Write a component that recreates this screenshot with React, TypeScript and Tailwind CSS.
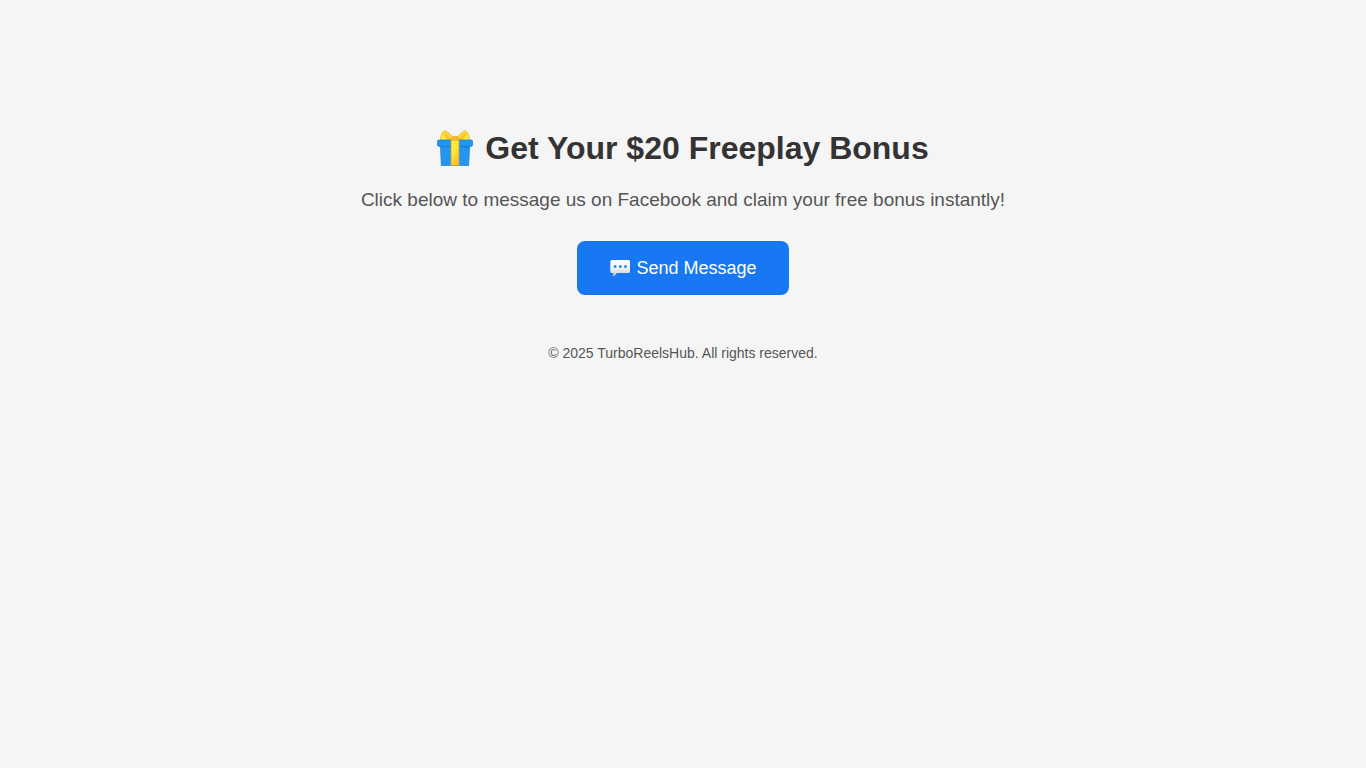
function GiftIcon() {
  return (
    <svg className="h-9 w-9 shrink-0" viewBox="21 18 108 108" role="img" aria-label="Gift">
      <defs>
        <linearGradient id="ribbon" x1="0" y1="0" x2="0.35" y2="1">
          <stop offset="0" stopColor="#ffee3b" />
          <stop offset="0.5" stopColor="#fee838" />
          <stop offset="1" stopColor="#fbc02d" />
        </linearGradient>
      </defs>
      <path d="M31 65H119L116 125H34Z" fill="#2196f3" stroke="#1c80d2" strokeWidth="2" />
      <path d="M32 67H118L117 76L88 68H62L33 71Z" fill="#1e88e5" />
      <path d="M31 49C31 38 36 23 44 20C50 19 63 33 72 42L66 49Z" fill="#fdd835" stroke="#dba52e" strokeWidth="1.5" />
      <path d="M119 49C119 38 114 23 106 20C100 19 87 33 78 42L84 49Z" fill="#fdd835" stroke="#dba52e" strokeWidth="1.5" />
      <path d="M41 28C47 29 58 39 64 47H55C49 42 43 35 41 28Z" fill="#fbc02d" />
      <path d="M109 28C103 29 92 39 86 47H95C101 42 107 35 109 28Z" fill="#fbc02d" />
      <path d="M33 48C34 40 37 33 40 30C42 37 47 43 53 48Z" fill="#ffeb3b" />
      <path d="M117 48C116 40 113 33 110 30C108 37 103 43 97 48Z" fill="#ffeb3b" />
      <rect x="22" y="48" width="106" height="19" rx="5" fill="#2196f3" stroke="#1976c5" strokeWidth="2" />
      <rect x="63" y="46" width="24" height="79" fill="url(#ribbon)" stroke="#d99b27" strokeWidth="2" />
      <path d="M62 49C62 41 68 37 75 37C82 37 88 41 88 49Z" fill="#f9b92d" stroke="#c9952f" strokeWidth="1.5" />
    </svg>
  );
}

function SpeechIcon() {
  return (
    <svg className="h-[18px] w-[22px] shrink-0" viewBox="0 0 22 18" role="img" aria-label="Chat">
      <defs>
        <linearGradient id="bubble" x1="0" y1="0" x2="0" y2="1">
          <stop offset="0" stopColor="#ffffff" />
          <stop offset="0.45" stopColor="#f5f5f5" />
          <stop offset="1" stopColor="#cccccc" />
        </linearGradient>
      </defs>
      <path
        d="M3 1H19.5Q21 1 21 2.5V12.5Q21 14 19.5 14H7.8C6.8 15.6 5.4 17 4 17.2C3.4 17.1 3.7 16.7 4 16.2C4.4 15.5 4.5 14.8 4.4 14H3Q1.3 14 1.3 12.5V2.5Q1.3 1 3 1Z"
        fill="url(#bubble)"
      />
      <circle cx="6.1" cy="7.4" r="1.5" fill="#2b8fe0" />
      <circle cx="11.3" cy="7.4" r="1.5" fill="#2b8fe0" />
      <circle cx="16.5" cy="7.4" r="1.5" fill="#2b8fe0" />
    </svg>
  );
}

export default function App() {
  return (
    <main className="min-h-screen bg-[#f5f5f5] px-5 pt-[126px] pb-12 text-center font-['Liberation_Sans',Arial,sans-serif]">
      <h1 className="flex items-center justify-center gap-3 text-[32px] leading-11 font-bold text-[#333]">
        <GiftIcon />
        <span>Get Your $20 Freeplay Bonus</span>
      </h1>
      <p className="mt-4 text-[19px] leading-7 text-[#555]">
        Click below to message us on Facebook and claim your free bonus instantly!
      </p>
      <div className="mt-[27px] flex justify-center">
        <a
          href="#message"
          className="flex items-center gap-[5px] rounded-lg bg-[#1877f2] px-8 py-4 text-lg leading-[22px] text-white"
        >
          <SpeechIcon />
          <span>Send Message</span>
        </a>
      </div>
      <footer className="mt-12 text-sm text-[#555]">© 2025 TurboReelsHub. All rights reserved.</footer>
    </main>
  );
}
